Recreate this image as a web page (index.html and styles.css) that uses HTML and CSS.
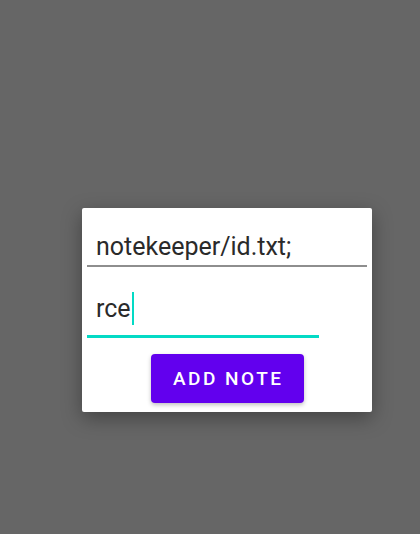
FILE: index.html
```html
<!DOCTYPE html>
<html>
<head>
<meta charset="utf-8">
<link rel="stylesheet" href="styles.css">
</head>
<body>
<div class="dialog">
  <div class="field field-plain">notekeeper/id.txt;</div>
  <div class="field field-focus"><span class="value">rce</span><span class="caret"></span></div>
  <div class="actions">
    <button class="btn">ADD NOTE</button>
  </div>
</div>
</body>
</html>
```

FILE: styles.css
```css
html, body {
  margin: 0;
  padding: 0;
  height: 100%;
}
body {
  background: #666666;
  font-family: Roboto, "Noto Sans", sans-serif;
  padding-top: 208px;
  padding-left: 82px;
  box-sizing: border-box;
}
.dialog {
  width: 290px;
  height: 204px;
  background: #ffffff;
  border-radius: 2px;
  box-shadow: 0 6px 20px rgba(0,0,0,0.35);
  box-sizing: border-box;
  padding: 26px 5px 0 5px;
  display: flex;
  flex-direction: column;
}
.field {
  font-size: 25px;
  line-height: 26px;
  color: #2a2a2a;
  padding-left: 9px;
  box-sizing: border-box;
}
.field-plain {
  padding-bottom: 5px;
  border-bottom: 2px solid #8e8e8e;
}
.field-focus {
  width: 232px;
  margin-top: 25px;
  padding-bottom: 10px;
  border-bottom: 3px solid #03dac5;
  display: flex;
  align-items: center;
}
.caret {
  display: inline-block;
  width: 2px;
  height: 33px;
  background: #03dac5;
  margin-left: 1px;
}
.actions {
  display: flex;
  justify-content: center;
  margin-top: 16px;
}
.btn {
  width: 153px;
  height: 49px;
  background: #6200ee;
  color: #ffffff;
  border: none;
  border-radius: 4px;
  font-family: Roboto, "Noto Sans", sans-serif;
  font-weight: 500;
  font-size: 19px;
  letter-spacing: 2.5px;
  text-indent: 2.5px;
  box-shadow: 0 2px 4px rgba(0,0,0,0.25);
  padding: 0;
}
```
